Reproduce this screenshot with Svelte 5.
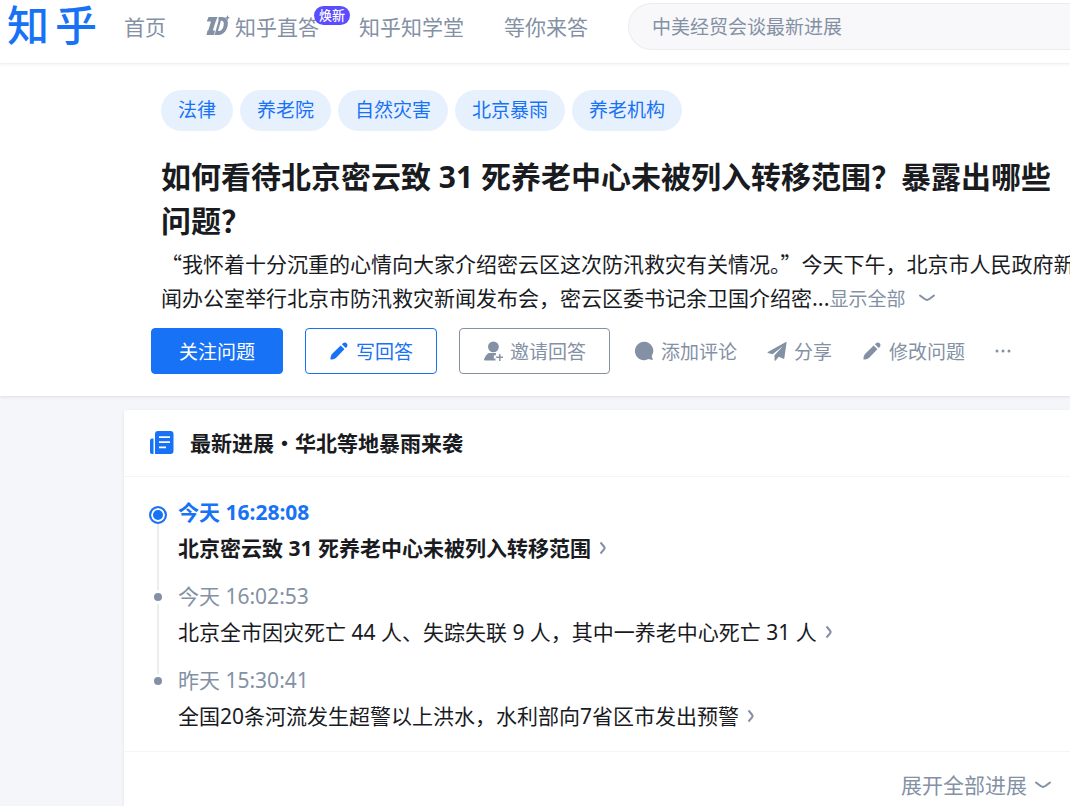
<script>
  const tags = ["法律", "养老院", "自然灾害", "北京暴雨", "养老机构"];

  const events = [
    { time: "今天 16:28:08", title: "北京密云致 31 死养老中心未被列入转移范围", active: true },
    { time: "今天 16:02:53", title: "北京全市因灾死亡 44 人、失踪失联 9 人，其中一养老中心死亡 31 人" },
    { time: "昨天 15:30:41", title: "全国20条河流发生超警以上洪水，水利部向7省区市发出预警" },
  ];

  let keyword = "";
</script>

{#snippet pencil()}
  <svg class="icon" viewBox="0 0 24 24" aria-hidden="true">
    <path d="M14 5.500 18.500 10 8.600 20.100C7.600 21.100 6.400 21.600 3.200 22.300 2 22.500 1.500 22 1.700 20.800 2.400 17.600 2.900 16.400 3.900 15.400Z" />
    <path d="M15.500 4 17.200 2.300A3.300 3.300 0 0 1 21.700 6.800L20 8.500Z" />
  </svg>
{/snippet}

{#snippet chevron()}
  <svg class="chevron" viewBox="0 0 18 10" aria-hidden="true">
    <path d="M2 2.500Q7.500 6.800 9 7 10.500 6.800 16 2.500" />
  </svg>
{/snippet}

<div class="page" lang="zh-CN">
  <header>
    <a class="logo" href="#home" aria-label="知乎"><span>知</span><span>乎</span></a>
    <nav>
      <a href="#home">首页</a>
      <a class="zhida" href="#zhida">
        <svg viewBox="0 0 24 22" aria-hidden="true">
          <path d="M2.500 2H11.500Q10.500 4.500 9.500 7L6.800 15.500H9L8 20H.5L1.500 15.500H2.200L5 6.500H.8Z" />
          <path fill-rule="evenodd" d="M12.500 2H15.500C20.500 2 22.500 5 21.700 10.200 20.600 16.800 16.700 20 11.500 20H8.500L12.500 6ZM15 5.500 12 16C15.400 16 17 14 17.600 10.500 18.100 7.200 17.500 5.800 15 5.500Z" />
          <path d="M21.500 0 22.300 1.900 24 2.700 22.300 3.500 21.500 5.400 20.700 3.500 19 2.700 20.700 1.900Z" />
        </svg>
        知乎直答
        <span class="badge">焕新</span>
      </a>
      <a href="#school">知乎知学堂</a>
      <a href="#waiting">等你来答</a>
    </nav>
    <input class="search" type="search" aria-label="搜索" placeholder="中美经贸会谈最新进展" bind:value={keyword} />
  </header>

  <section class="question">
    <div class="tags">
      {#each tags as tag}
        <a class="tag" href="#topic">{tag}</a>
      {/each}
    </div>
    <h1>如何看待北京密云致 31 死养老中心未被列入转移范围？暴露出哪些问题？</h1>
    <p class="detail">
      “我怀着十分沉重的心情向大家介绍密云区这次防汛救灾有关情况。”今天下午，北京市人民政府新<br />闻办公室举行北京市防汛救灾新闻发布会，密云区委书记余卫国介绍密...<button class="more">显示全部 {@render chevron()}</button>
    </p>
    <div class="actions">
      <button class="btn primary">关注问题</button>
      <button class="btn outline">{@render pencil()}写回答</button>
      <button class="btn">
        <svg class="icon" viewBox="0 0 24 24" aria-hidden="true">
          <circle cx="12.500" cy="7" r="6.500" />
          <path d="M7 14.500H15.500V17H13V21H15V23.500H3C1.500 23.500 1 22.500 1.500 21.300 2.800 18.300 4.500 15.800 7 14.500Z" />
          <path d="M19.300 15.500H21V18.700H24V20.500H21V24H19.300V20.500H15.800V18.700H19.300Z" />
        </svg>
        邀请回答
      </button>
      <button class="plain">
        <svg class="icon" viewBox="0 0 24 24" aria-hidden="true">
          <path d="M12 1A11 11 0 1 0 17.300 21.700C18.800 22.300 20.500 22.700 22.200 22.500 22.800 22.400 23 21.800 22.600 21.400 21.800 20.600 21.400 19.500 21.300 18A11 11 0 0 0 12 1Z" />
        </svg>
        添加评论
      </button>
      <button class="plain">
        <svg class="icon" viewBox="0 0 24 24" aria-hidden="true">
          <path d="M1 13.200 22.600 1.200C23.200.9 23.600 1.200 23.500 1.900L20.800 20.800C20.700 21.500 20.200 21.700 19.600 21.400L14.200 18.900 10.300 23.300C9.700 24 9 23.700 9 22.800V17L19 6.300 6.700 15.800 1.200 14.300C.5 14.100.5 13.500 1 13.200Z" />
        </svg>
        分享
      </button>
      <button class="plain">{@render pencil()}修改问题</button>
      <button class="plain" aria-label="更多">
        <svg class="dots" viewBox="0 0 16 16" aria-hidden="true">
          <circle cx="2" cy="8" r="1.500" /><circle cx="8" cy="8" r="1.500" /><circle cx="14" cy="8" r="1.500" />
        </svg>
      </button>
    </div>
  </section>

  <main>
    <div class="card-head">
      <svg viewBox="0 0 24 24" aria-hidden="true">
        <path d="M0 9.500Q0 7.500 2 7.500H3.500V23H2Q0 23 0 21Z" />
        <path fill-rule="evenodd" d="M5 3Q5 0 8 0H20.500Q23.500 0 23.500 3V20Q23.500 23 20.500 23H5ZM9 5.200V7H20V5.200ZM9 10.300V12.100H20V10.300ZM9 15.400V17.200H16V15.400Z" />
      </svg>
      <h2>最新进展・华北等地暴雨来袭</h2>
    </div>
    <ol>
      {#each events as event}
        <li class:active={event.active}>
          <span class="rail"><i class="dot"></i></span>
          <div>
            <time>{event.time}</time>
            <a href="#event">
              {event.title}
              <svg viewBox="0 0 8 14" aria-hidden="true"><path d="M1.500 1.500Q5.500 6 5.700 7 5.500 8 1.500 12.500" /></svg>
            </a>
          </div>
        </li>
      {/each}
    </ol>
    <div class="card-foot">
      <button>展开全部进展 {@render chevron()}</button>
    </div>
  </main>
</div>

<style>
  :global(body) {
    background: #f4f6f9;
  }

  .page {
    min-height: 100vh;
    overflow-x: hidden;
    font-family: "Noto Sans", "Noto Sans CJK SC", sans-serif;
    font-size: 21px;
    font-weight: 400;
    color: #191b1f;
  }

  a {
    color: inherit;
    text-decoration: none;
  }

  button,
  input {
    font: inherit;
    color: inherit;
  }

  button {
    display: inline-flex;
    align-items: center;
    padding: 0;
    border: 0;
    background: none;
    white-space: nowrap;
    cursor: pointer;
  }

  svg {
    flex: none;
    fill: currentColor;
  }

  header {
    position: relative;
    display: flex;
    align-items: center;
    padding: 3px 0 13px 7px;
    background: #fff;
    box-shadow: 0 1px 3px rgba(25, 27, 31, 0.1);
    color: #8491a5;
    white-space: nowrap;
  }

  .logo {
    display: flex;
    gap: 6px;
    margin-right: 27px;
    padding-bottom: 4px;
    font-size: 42px;
    font-weight: 500;
    line-height: 42px;
    color: #1772f6;
  }

  nav {
    display: flex;
    gap: 40px;
    margin-right: 40px;
    padding-bottom: 2px;
  }

  .zhida {
    position: relative;
    display: flex;
    align-items: center;
    gap: 5px;
  }

  .zhida svg {
    width: 24px;
    height: 22px;
  }

  .badge {
    position: absolute;
    top: -5px;
    right: -31px;
    padding: 0 5px;
    border-radius: 10px;
    background: #5b4dff;
    color: #fff;
    font-size: 13px;
    font-weight: 500;
    line-height: 19px;
  }

  .search {
    box-sizing: border-box;
    flex: 1;
    min-width: 0;
    height: 47px;
    padding: 0 23px;
    border: 1px solid #ebeced;
    border-right: 0;
    border-radius: 24px 0 0 24px;
    background: #f8f8fa;
    font-size: 19px;
    outline: none;
  }

  .search::placeholder {
    color: #8491a5;
    opacity: 1;
  }

  .question {
    padding: 27px 0 22px 161px;
    background: #fff;
    box-shadow: 0 1px 3px rgba(25, 27, 31, 0.1);
  }

  .tags {
    display: flex;
    gap: 7px;
  }

  .tag {
    padding: 0 17px;
    border-radius: 21px;
    background: #e7f1fe;
    color: #1772f6;
    font-size: 19px;
    line-height: 41px;
  }

  h1 {
    margin: 24px 0 3px;
    font-size: 30px;
    font-weight: 700;
    line-height: 44px;
  }

  .detail {
    margin: 0 0 14px;
    font-family: "Noto Sans CJK SC", sans-serif;
    line-height: 34px;
    white-space: nowrap;
  }

  .more {
    gap: 12px;
    font-size: 19px;
    line-height: 28px;
    color: #8491a5;
  }

  .chevron {
    width: 18px;
    height: 10px;
    fill: none;
    stroke: currentColor;
    stroke-width: 2;
    stroke-linecap: round;
  }

  .actions {
    display: flex;
    align-items: center;
    gap: 22px;
    margin-left: -10px;
    font-size: 19px;
    color: #8491a5;
  }

  .icon {
    width: 20px;
    height: 20px;
  }

  .btn {
    box-sizing: border-box;
    justify-content: center;
    gap: 7px;
    height: 46px;
    padding: 0 23px;
    border: 1px solid #8491a5;
    border-radius: 4px;
  }

  .primary {
    padding: 0 27px;
    border-color: #1772f6;
    background: #1772f6;
    color: #fff;
  }

  .outline {
    border-color: #1772f6;
    color: #1772f6;
  }

  .plain {
    gap: 7px;
    margin: 0 6px 0 2px;
  }

  .dots {
    width: 16px;
    height: 16px;
  }

  main {
    margin: 14px 0 0 124px;
    border-radius: 3px 0 0 3px;
    background: #fff;
    box-shadow: 0 1px 3px rgba(25, 27, 31, 0.1);
  }

  .card-head {
    display: flex;
    align-items: center;
    gap: 16px;
    padding: 0 26px;
    border-bottom: 1px solid #f4f5f7;
    line-height: 66px;
  }

  .card-head svg {
    width: 24px;
    height: 24px;
    color: #1772f6;
  }

  h2 {
    margin: 0;
    font-size: 21px;
    font-weight: 700;
  }

  ol {
    margin: 0;
    padding: 17px 26px 5px;
    list-style: none;
  }

  li {
    display: flex;
    gap: 12px;
    line-height: 36px;
  }

  li > div {
    padding-bottom: 12px;
  }

  .rail {
    display: flex;
    flex-direction: column;
    align-items: center;
    width: 16px;
  }

  /* the line runs above and below each dot */
  .rail::before {
    content: "";
    width: 2px;
    height: 12px;
    background: #ebeced;
  }

  .rail::after {
    content: "";
    flex: 1;
    width: 2px;
    background: #ebeced;
  }

  li:first-child .rail::before,
  li:last-child .rail::after {
    background: none;
  }

  .dot {
    width: 8px;
    height: 8px;
    margin: 3px 0;
    border-radius: 50%;
    background: #8491a5;
  }

  .active .dot {
    box-sizing: border-box;
    width: 18px;
    height: 18px;
    margin: 0;
    border: 2px solid #1772f6;
    background: #1772f6;
    box-shadow: inset 0 0 0 2px #fff;
  }

  time {
    display: block;
    color: #8491a5;
  }

  li a {
    display: flex;
    align-items: center;
    gap: 8px;
  }

  li a svg {
    width: 8px;
    height: 14px;
    fill: none;
    stroke: #8491a5;
    stroke-width: 2;
  }

  .active time {
    color: #1772f6;
    font-weight: 700;
  }

  .active a {
    font-weight: 700;
  }

  .card-foot {
    display: flex;
    justify-content: flex-end;
    padding: 0 18px;
    border-top: 1px solid #f4f5f7;
    line-height: 66px;
    color: #8491a5;
  }

  .card-foot button {
    gap: 7px;
  }
</style>
